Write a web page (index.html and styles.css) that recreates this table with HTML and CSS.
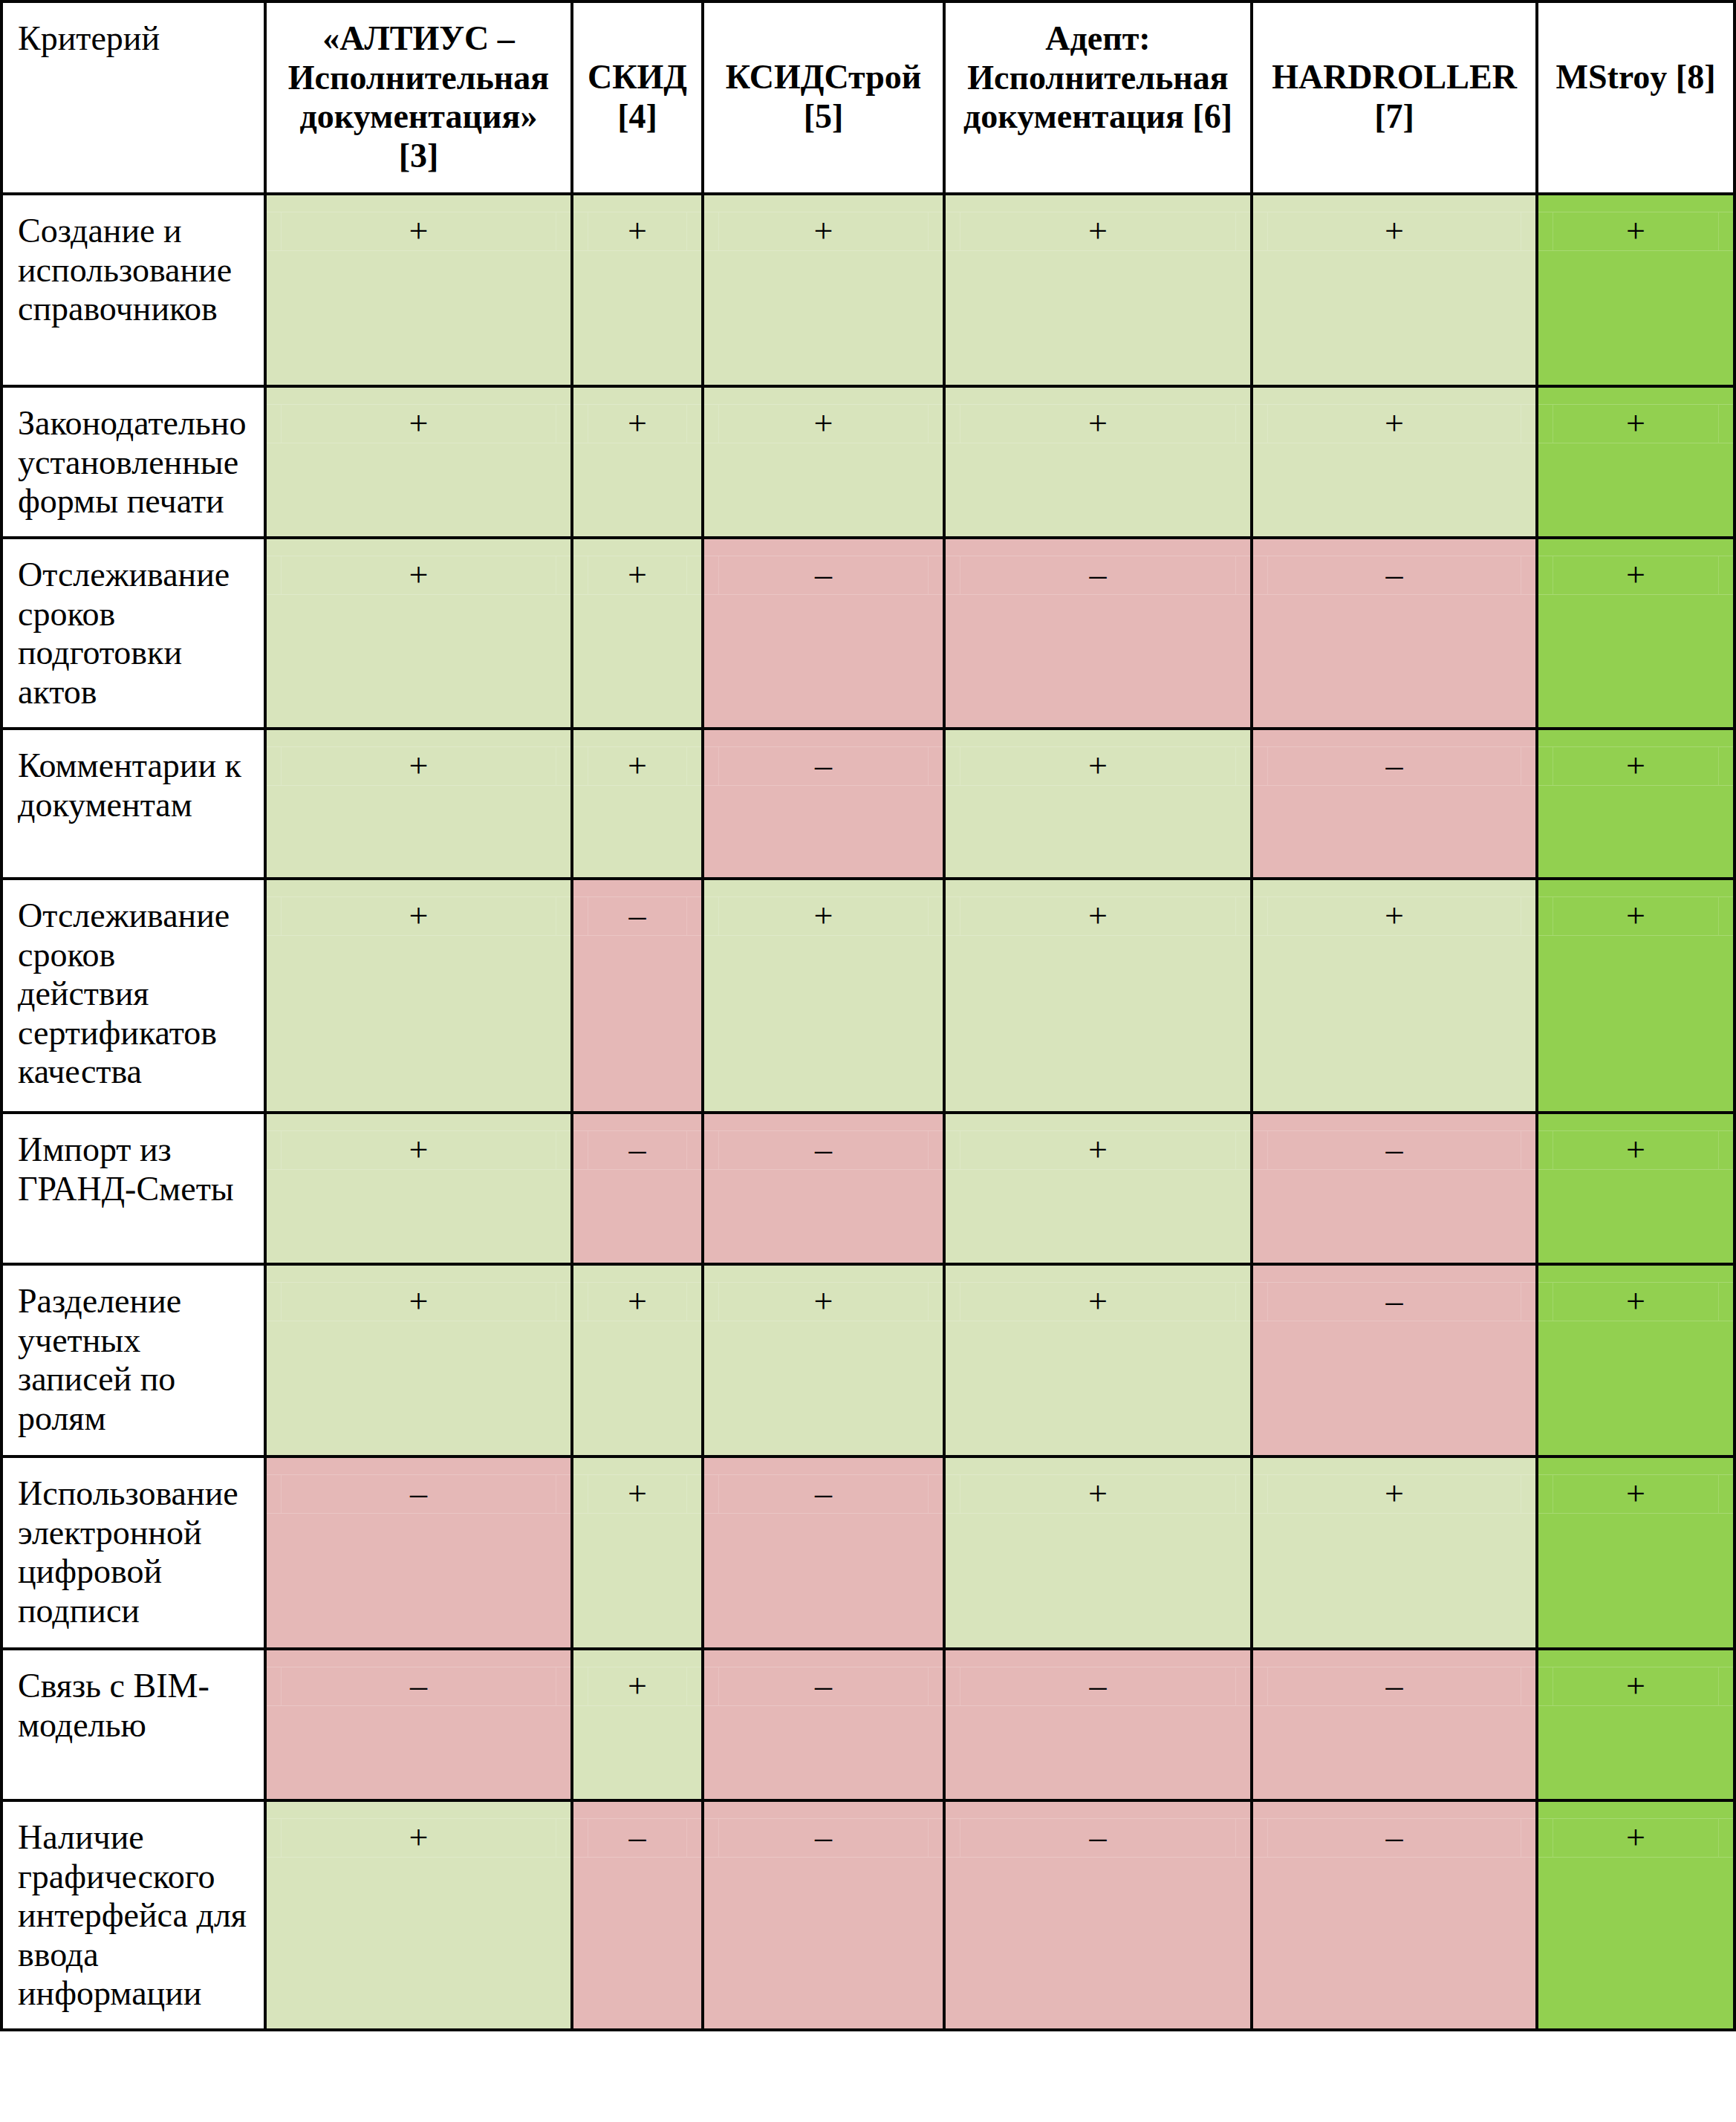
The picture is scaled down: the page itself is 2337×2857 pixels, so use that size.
FILE: index.html
```html
<!DOCTYPE html>
<html lang="ru">
<head>
<meta charset="utf-8">
<title>Сравнение систем исполнительной документации</title>
<link rel="stylesheet" href="styles.css">
</head>
<body>
<div class="cmp">
  <div class="cell hd hd-crit">Критерий</div>
  <div class="cell hd">«АЛТИУС –<br>Исполнительная<br>документация»<br>[3]</div>
  <div class="cell hd hd-low">СКИД<br>[4]</div>
  <div class="cell hd hd-low">КСИДСтрой<br>[5]</div>
  <div class="cell hd">Адепт:<br>Исполнительная<br>документация [6]</div>
  <div class="cell hd hd-low">HARDROLLER<br>[7]</div>
  <div class="cell hd hd-low">MStroy [8]</div>

  <div class="cell crit">Создание и<br>использование<br>справочников</div>
  <div class="cell val yes"><div class="mark"><span>+</span></div></div>
  <div class="cell val yes"><div class="mark"><span>+</span></div></div>
  <div class="cell val yes"><div class="mark"><span>+</span></div></div>
  <div class="cell val yes"><div class="mark"><span>+</span></div></div>
  <div class="cell val yes"><div class="mark"><span>+</span></div></div>
  <div class="cell val best"><div class="mark"><span>+</span></div></div>

  <div class="cell crit">Законодательно<br>установленные<br>формы печати</div>
  <div class="cell val yes"><div class="mark"><span>+</span></div></div>
  <div class="cell val yes"><div class="mark"><span>+</span></div></div>
  <div class="cell val yes"><div class="mark"><span>+</span></div></div>
  <div class="cell val yes"><div class="mark"><span>+</span></div></div>
  <div class="cell val yes"><div class="mark"><span>+</span></div></div>
  <div class="cell val best"><div class="mark"><span>+</span></div></div>

  <div class="cell crit">Отслеживание<br>сроков<br>подготовки<br>актов</div>
  <div class="cell val yes"><div class="mark"><span>+</span></div></div>
  <div class="cell val yes"><div class="mark"><span>+</span></div></div>
  <div class="cell val no"><div class="mark"><span>–</span></div></div>
  <div class="cell val no"><div class="mark"><span>–</span></div></div>
  <div class="cell val no"><div class="mark"><span>–</span></div></div>
  <div class="cell val best"><div class="mark"><span>+</span></div></div>

  <div class="cell crit">Комментарии к<br>документам</div>
  <div class="cell val yes"><div class="mark"><span>+</span></div></div>
  <div class="cell val yes"><div class="mark"><span>+</span></div></div>
  <div class="cell val no"><div class="mark"><span>–</span></div></div>
  <div class="cell val yes"><div class="mark"><span>+</span></div></div>
  <div class="cell val no"><div class="mark"><span>–</span></div></div>
  <div class="cell val best"><div class="mark"><span>+</span></div></div>

  <div class="cell crit">Отслеживание<br>сроков<br>действия<br>сертификатов<br>качества</div>
  <div class="cell val yes"><div class="mark"><span>+</span></div></div>
  <div class="cell val no"><div class="mark"><span>–</span></div></div>
  <div class="cell val yes"><div class="mark"><span>+</span></div></div>
  <div class="cell val yes"><div class="mark"><span>+</span></div></div>
  <div class="cell val yes"><div class="mark"><span>+</span></div></div>
  <div class="cell val best"><div class="mark"><span>+</span></div></div>

  <div class="cell crit">Импорт из<br>ГРАНД-Сметы</div>
  <div class="cell val yes"><div class="mark"><span>+</span></div></div>
  <div class="cell val no"><div class="mark"><span>–</span></div></div>
  <div class="cell val no"><div class="mark"><span>–</span></div></div>
  <div class="cell val yes"><div class="mark"><span>+</span></div></div>
  <div class="cell val no"><div class="mark"><span>–</span></div></div>
  <div class="cell val best"><div class="mark"><span>+</span></div></div>

  <div class="cell crit">Разделение<br>учетных<br>записей по<br>ролям</div>
  <div class="cell val yes"><div class="mark"><span>+</span></div></div>
  <div class="cell val yes"><div class="mark"><span>+</span></div></div>
  <div class="cell val yes"><div class="mark"><span>+</span></div></div>
  <div class="cell val yes"><div class="mark"><span>+</span></div></div>
  <div class="cell val no"><div class="mark"><span>–</span></div></div>
  <div class="cell val best"><div class="mark"><span>+</span></div></div>

  <div class="cell crit">Использование<br>электронной<br>цифровой<br>подписи</div>
  <div class="cell val no"><div class="mark"><span>–</span></div></div>
  <div class="cell val yes"><div class="mark"><span>+</span></div></div>
  <div class="cell val no"><div class="mark"><span>–</span></div></div>
  <div class="cell val yes"><div class="mark"><span>+</span></div></div>
  <div class="cell val yes"><div class="mark"><span>+</span></div></div>
  <div class="cell val best"><div class="mark"><span>+</span></div></div>

  <div class="cell crit">Связь с BIM-<br>моделью</div>
  <div class="cell val no"><div class="mark"><span>–</span></div></div>
  <div class="cell val yes"><div class="mark"><span>+</span></div></div>
  <div class="cell val no"><div class="mark"><span>–</span></div></div>
  <div class="cell val no"><div class="mark"><span>–</span></div></div>
  <div class="cell val no"><div class="mark"><span>–</span></div></div>
  <div class="cell val best"><div class="mark"><span>+</span></div></div>

  <div class="cell crit">Наличие<br>графического<br>интерфейса для<br>ввода<br>информации</div>
  <div class="cell val yes"><div class="mark"><span>+</span></div></div>
  <div class="cell val no"><div class="mark"><span>–</span></div></div>
  <div class="cell val no"><div class="mark"><span>–</span></div></div>
  <div class="cell val no"><div class="mark"><span>–</span></div></div>
  <div class="cell val no"><div class="mark"><span>–</span></div></div>
  <div class="cell val best"><div class="mark"><span>+</span></div></div>
</div>
</body>
</html>
```

FILE: styles.css
```css
html, body {
  margin: 0;
  padding: 0;
  background: #ffffff;
}

body {
  font-family: "Liberation Serif", "Times New Roman", serif;
  font-size: 46px;
  color: #000000;
}

.cmp {
  display: grid;
  width: 2337px;
  box-sizing: border-box;
  grid-template-columns: 351px 409px 172px 321px 410px 380px 262px;
  grid-template-rows: 255px 255px 200px 253px 198px 311px 200px 255px 255px 200px 305px;
  gap: 4px;
  padding: 4px;
  background: #050505;
}

.cell {
  background: #ffffff;
  line-height: 52.5px;
  white-space: nowrap;
  overflow: hidden;
}

.hd {
  padding: 22px 10px 0;
  font-weight: bold;
  text-align: center;
}

.hd-crit {
  font-weight: normal;
  text-align: left;
  padding-left: 20px;
}

.hd-low {
  padding-top: 74px;
}

.crit {
  padding: 22px 0 0 20px;
}

.val {
  padding-top: 22px;
  text-align: center;
}

.yes {
  background: #d8e4bc;
}

.no {
  background: #e5b8b7;
}

.best {
  background: #92d050;
}

.mark {
  height: 53px;
  box-sizing: border-box;
  border-top: 1px solid rgba(255, 255, 255, 0.2);
  border-bottom: 1px solid rgba(255, 255, 255, 0.2);
}

.mark span {
  display: block;
  height: 100%;
  margin: 0 19px;
  line-height: 50px;
  border-left: 1px solid rgba(255, 255, 255, 0.15);
  border-right: 1px solid rgba(255, 255, 255, 0.15);
}
```
